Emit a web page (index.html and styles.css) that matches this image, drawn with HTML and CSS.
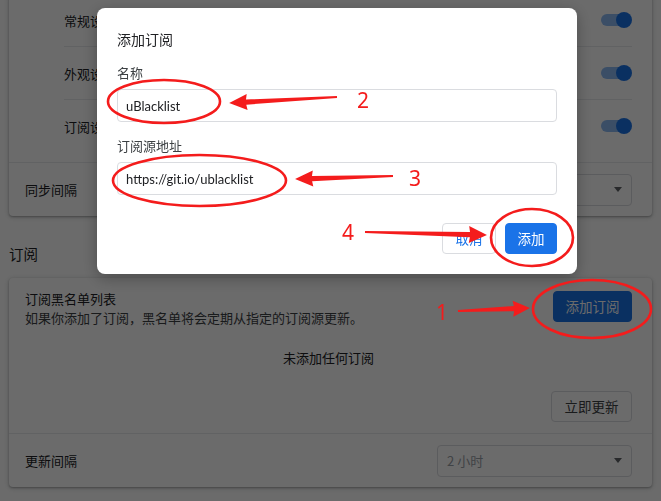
FILE: index.html
```html
<!DOCTYPE html>
<html lang="zh-CN">
<head>
<meta charset="utf-8">
<title>uBlacklist 选项</title>
<link rel="stylesheet" href="styles.css">
</head>
<body>
<main class="page">
  <section class="card card-top">
    <div class="sublist">
      <div class="sub-row"><span>常规设置</span><span class="toggle"></span></div>
      <div class="sub-row"><span>外观设置</span><span class="toggle"></span></div>
      <div class="sub-row"><span>订阅设置</span><span class="toggle"></span></div>
    </div>
    <div class="row">
      <span>同步间隔</span>
      <div class="select"><span class="muted"></span><i class="caret"></i></div>
    </div>
  </section>

  <h2 class="section-title">订阅</h2>

  <section class="card">
    <div class="subs">
      <div class="subs-head">
        <div class="subs-text">
          <div class="item-title">订阅黑名单列表</div>
          <div class="item-desc">如果你添加了订阅，黑名单将会定期从指定的订阅源更新。</div>
        </div>
        <button class="btn btn-primary btn-add">添加订阅</button>
      </div>
      <div class="empty">未添加任何订阅</div>
      <div class="subs-foot"><button class="btn btn-outline">立即更新</button></div>
    </div>
    <div class="row">
      <span>更新间隔</span>
      <div class="select"><span class="muted">2 小时</span><i class="caret"></i></div>
    </div>
  </section>
</main>

<div class="scrim"></div>

<div class="dialog">
  <h1 class="dialog-title">添加订阅</h1>
  <label class="field-label">名称</label>
  <div class="input">uBlacklist</div>
  <label class="field-label second">订阅源地址</label>
  <div class="input">https://git.io/ublacklist</div>
  <div class="actions">
    <button class="btn btn-outline btn-cancel">取消</button>
    <button class="btn btn-primary">添加</button>
  </div>
</div>

<svg class="annot" width="661" height="501" viewBox="0 0 661 501" xmlns="http://www.w3.org/2000/svg">
  <g fill="none" stroke="#f41c1c" stroke-width="2.6">
    <ellipse cx="164" cy="101.5" rx="56" ry="21.5"/>
    <ellipse cx="199.5" cy="180.5" rx="86.5" ry="25.5"/>
    <ellipse cx="532" cy="237.5" rx="41" ry="28.5"/>
    <ellipse cx="592" cy="309" rx="59" ry="29"/>
  </g>
  <g fill="#f41c1c">
    <polygon transform="translate(337 97) rotate(176.8)" points="0,-0.9 91,-2.6 90,-8 108,0 90,8 91,2.6 0,0.9"/>
    <polygon transform="translate(393 176) rotate(178.2)" points="0,-0.9 81,-2.6 80,-8 98,0 80,8 81,2.6 0,0.9"/>
    <polygon transform="translate(365 232) rotate(1.4)" points="0,-0.9 105,-2.6 104,-8.5 122,0 104,8.5 105,2.6 0,0.9"/>
    <polygon transform="translate(458 311) rotate(-2.4)" points="0,-0.9 56,-2.6 55,-8 72,0 55,8 56,2.6 0,0.9"/>
  </g>
  <g class="num" fill="#f41c1c">
    <text x="436" y="320">1</text>
    <text x="357" y="108">2</text>
    <text x="409" y="186">3</text>
    <text x="342" y="240">4</text>
  </g>
</svg>
</body>
</html>
```

FILE: styles.css
```css
* { box-sizing: border-box; }

html, body {
  margin: 0;
  padding: 0;
  width: 661px;
  height: 501px;
  overflow: hidden;
  background: #ffffff;
  font-family: "Noto Sans CJK SC", "Noto Sans", sans-serif;
  color: #202124;
  font-size: 13px;
}

.page {
  padding: 0 9px;
  margin-top: -6px;
}

.card {
  background: #ffffff;
  border-radius: 4px;
  box-shadow: 0 1px 2px rgba(60, 64, 67, 0.35), 0 1px 4px 1px rgba(60, 64, 67, 0.18);
}

.sublist {
  padding: 0 20px 10px 55px;
}

.sub-row {
  height: 53px;
  display: flex;
  align-items: center;
  justify-content: space-between;
  line-height: 19px;
}

.sub-row + .sub-row {
  border-top: 1px solid #e8eaed;
}

.sub-row:first-child { height: 52px; }

.toggle {
  position: relative;
  width: 31px;
  height: 16px;
}

.toggle::before {
  content: "";
  position: absolute;
  left: 0;
  top: 2px;
  width: 27px;
  height: 12px;
  border-radius: 6px;
  background: rgba(26, 115, 232, 0.5);
}

.toggle::after {
  content: "";
  position: absolute;
  right: 0;
  top: 0;
  width: 16px;
  height: 16px;
  border-radius: 50%;
  background: #1a73e8;
}

.row {
  height: 54px;
  border-top: 1px solid #e8eaed;
  padding: 0 20px 0 16px;
  display: flex;
  align-items: center;
  justify-content: space-between;
  line-height: 19px;
}

.select {
  width: 195px;
  height: 32px;
  border: 1px solid #dadce0;
  border-radius: 4px;
  display: flex;
  align-items: center;
  justify-content: space-between;
  padding: 0 9px 0 9px;
}

.muted { color: #9aa0a6; }

.caret {
  width: 0;
  height: 0;
  border-left: 4.5px solid transparent;
  border-right: 4.5px solid transparent;
  border-top: 5px solid #5f6368;
}

.section-title {
  margin: 28px 0 14px;
  font-size: 14.5px;
  font-weight: 400;
  line-height: 20px;
}

.subs {
  padding: 11px 20px 11px 16px;
}

.subs-head {
  display: flex;
  justify-content: space-between;
  align-items: flex-start;
}

.item-title, .item-desc { line-height: 19px; }
.item-desc { color: #3c4043; }

.btn-add { margin-top: 2px; }

.empty {
  text-align: center;
  line-height: 19px;
  margin-top: 21px;
}

.subs-foot {
  display: flex;
  justify-content: flex-end;
  margin-top: 24px;
}

.btn {
  font-family: "Noto Sans CJK SC", "Noto Sans", sans-serif;
  font-size: 13.5px;
  height: 31px;
  padding: 0 11.5px;
  border-radius: 4px;
  border: 1px solid transparent;
  cursor: pointer;
  line-height: 1;
}

.btn-primary {
  background: #1a73e8;
  color: #ffffff;
  border-color: #1a73e8;
}

.btn-outline {
  background: #ffffff;
  color: #3c4043;
  border-color: #dadce0;
  padding: 0 12.5px;
}

.btn-cancel { color: #1a73e8; }

.scrim {
  position: fixed;
  inset: 0;
  background: rgba(0, 0, 0, 0.58);
}

.dialog {
  position: fixed;
  left: 97px;
  top: 8px;
  width: 480px;
  padding: 20px;
  background: #ffffff;
  border-radius: 8px;
  box-shadow: 0 4px 16px rgba(0, 0, 0, 0.3);
}

.dialog-title {
  margin: 0 0 14px;
  font-size: 14px;
  font-weight: 400;
  line-height: 22px;
  color: #202124;
}

.field-label {
  display: block;
  font-size: 13px;
  line-height: 18px;
  margin-bottom: 7px;
  color: #3c4043;
}

.field-label.second { margin-top: 15px; }

.input {
  height: 33px;
  border: 1px solid #dadce0;
  border-radius: 4px;
  padding: 0 8px;
  display: flex;
  align-items: center;
  font-family: "Lato", "Noto Sans CJK SC", sans-serif;
  font-size: 13px;
  color: #202124;
}

.actions {
  display: flex;
  justify-content: flex-end;
  gap: 9px;
  margin-top: 28px;
}

.annot {
  position: absolute;
  left: 0;
  top: 0;
  pointer-events: none;
}

.num {
  font-family: "Noto Sans", sans-serif;
  font-size: 21px;
}
```
